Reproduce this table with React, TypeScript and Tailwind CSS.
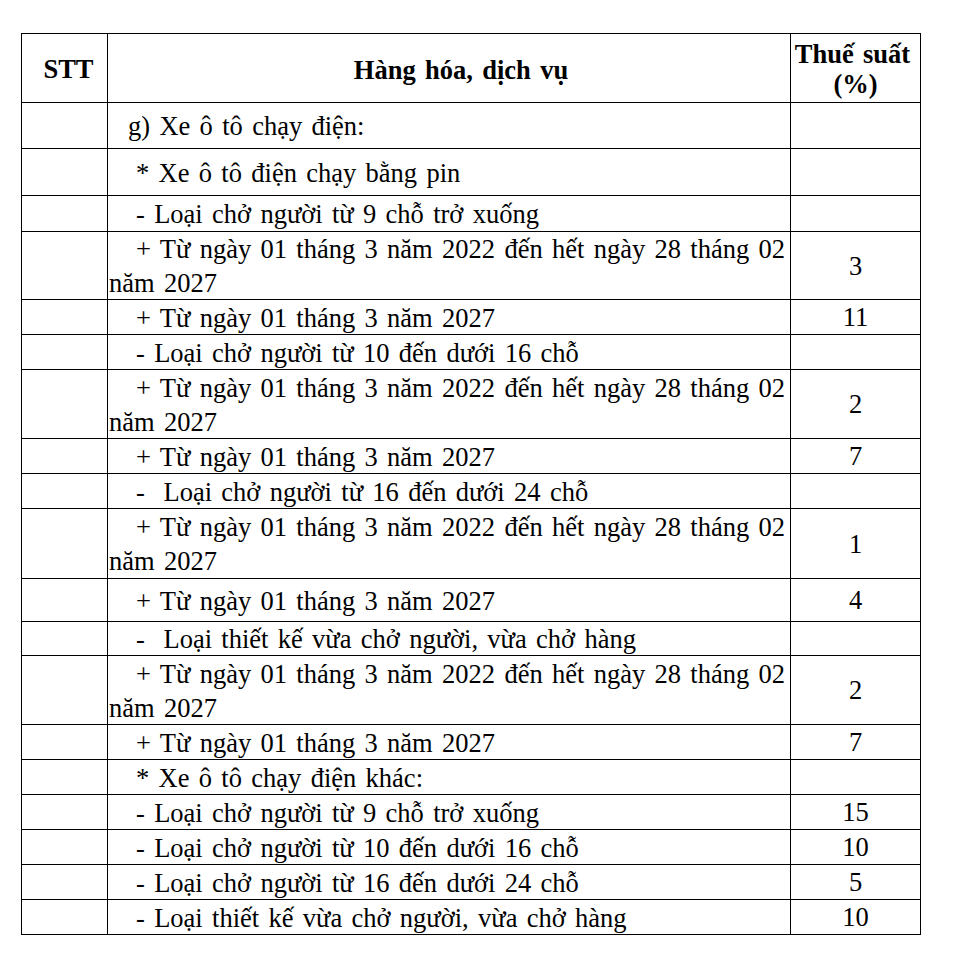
import React from "react";

type Row = { h: string; text: string; rate?: string; ind?: "g" | "n" };

const rows: Row[] = [
  { h: "h-[46px]", text: "g) Xe ô tô chạy điện:", ind: "g" },
  { h: "h-[47px]", text: "* Xe ô tô điện chạy bằng pin" },
  { h: "h-[36px]", text: "- Loại chở người từ 9 chỗ trở xuống" },
  { h: "h-[68px]", text: "+ Từ ngày 01 tháng 3 năm 2022 đến hết ngày 28 tháng 02\nnăm 2027", rate: "3" },
  { h: "h-[35px]", text: "+ Từ ngày 01 tháng 3 năm 2027", rate: "11" },
  { h: "h-[35px]", text: "- Loại chở người từ 10 đến dưới 16 chỗ" },
  { h: "h-[69px]", text: "+ Từ ngày 01 tháng 3 năm 2022 đến hết ngày 28 tháng 02\nnăm 2027", rate: "2" },
  { h: "h-[35px]", text: "+ Từ ngày 01 tháng 3 năm 2027", rate: "7" },
  { h: "h-[35px]", text: "-  Loại chở người từ 16 đến dưới 24 chỗ" },
  { h: "h-[70px]", text: "+ Từ ngày 01 tháng 3 năm 2022 đến hết ngày 28 tháng 02\nnăm 2027", rate: "1" },
  { h: "h-[43px]", text: "+ Từ ngày 01 tháng 3 năm 2027", rate: "4" },
  { h: "h-[34px]", text: "-  Loại thiết kế vừa chở người, vừa chở hàng" },
  { h: "h-[69px]", text: "+ Từ ngày 01 tháng 3 năm 2022 đến hết ngày 28 tháng 02\nnăm 2027", rate: "2" },
  { h: "h-[35px]", text: "+ Từ ngày 01 tháng 3 năm 2027", rate: "7" },
  { h: "h-[35px]", text: "* Xe ô tô chạy điện khác:" },
  { h: "h-[35px]", text: "- Loại chở người từ 9 chỗ trở xuống", rate: "15" },
  { h: "h-[35px]", text: "- Loại chở người từ 10 đến dưới 16 chỗ", rate: "10" },
  { h: "h-[35px]", text: "- Loại chở người từ 16 đến dưới 24 chỗ", rate: "5" },
  { h: "h-[34px]", text: "- Loại thiết kế vừa chở người, vừa chở hàng", rate: "10" },
];

export default function App() {
  return (
    <div
      className="min-h-[953px] w-[953px] bg-white pt-[33px] pl-[21px] text-black"
      style={{ fontFamily: '"Liberation Serif", "Times New Roman", serif' }}
    >
      <div className="w-[900px] border border-black text-[26.5px] [word-spacing:2.7px]">
        <div className="flex h-[69px] border-b border-black font-bold">
          <div className="flex w-[86px] items-center justify-center border-r border-black pl-[8px] pt-[4px]">
            STT
          </div>
          <div className="flex w-[683px] items-center justify-center border-r border-black pl-[24px] pt-[6px]">
            Hàng hóa, dịch vụ
          </div>
          <div className="flex flex-1 flex-col items-center justify-center leading-[30px] pt-[2px]">
            <span className="pr-[6px]">Thuế suất</span>
            <span>(%)</span>
          </div>
        </div>
        {rows.map((r, i) => (
          <div
            key={i}
            className={`flex ${r.h} border-b border-black last:border-b-0`}
          >
            <div className="w-[86px] border-r border-black" />
            <div className="flex w-[683px] items-center border-r border-black pl-[1px] pt-[1px]">
              <div
                className={`whitespace-pre-wrap leading-[34px] ${
                  r.ind === "g" ? "indent-[19px]" : "indent-[27px]"
                }`}
              >
                {r.text}
              </div>
            </div>
            <div className="flex flex-1 items-center justify-center leading-[34px]">
              {r.rate ?? ""}
            </div>
          </div>
        ))}
      </div>
    </div>
  );
}
